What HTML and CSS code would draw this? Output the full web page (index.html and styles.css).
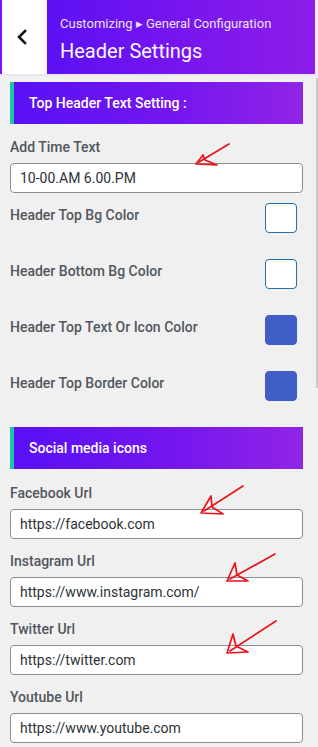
FILE: index.html
```html
<!DOCTYPE html>
<html>
<head>
<meta charset="utf-8">
<link rel="stylesheet" href="styles.css">
</head>
<body>
<div class="page">
  <header class="topbar">
    <div class="strip"></div>
    <button class="back" aria-label="Back">
      <svg width="12" height="16" viewBox="0 0 12 16"><polyline points="9,2 3,8 9,14" fill="none" stroke="#111" stroke-width="2.6" stroke-linecap="square"/></svg>
    </button>
    <div class="titles">
      <div class="crumb">Customizing ▸ General Configuration</div>
      <div class="title">Header Settings</div>
    </div>
  </header>

  <main class="content">
    <div class="section">Top Header Text Setting :</div>

    <div class="field field-time">
      <label class="label">Add Time Text</label>
      <input class="input" type="text" value="10-00.AM 6.00.PM">
    </div>

    <div class="color-row"><span class="label">Header Top Bg Color</span><span class="swatch"></span></div>
    <div class="color-row"><span class="label">Header Bottom Bg Color</span><span class="swatch"></span></div>
    <div class="color-row"><span class="label">Header Top Text Or Icon Color</span><span class="swatch filled"></span></div>
    <div class="color-row color-row-last"><span class="label">Header Top Border Color</span><span class="swatch filled"></span></div>

    <div class="section s2">Social media icons</div>

    <div class="field">
      <label class="label">Facebook Url</label>
      <input class="input" type="text" value="https://facebook.com">
    </div>
    <div class="field">
      <label class="label">Instagram Url</label>
      <input class="input" type="text" value="https://www.instagram.com/">
    </div>
    <div class="field">
      <label class="label">Twitter Url</label>
      <input class="input" type="text" value="https://twitter.com">
    </div>
    <div class="field">
      <label class="label">Youtube Url</label>
      <input class="input" type="text" value="https://www.youtube.com">
    </div>
  </main>

  <div class="scrollbar"></div>

  <svg class="arrows" width="318" height="747" viewBox="0 0 318 747">
    <g fill="none" stroke="#e8141b" stroke-width="1.7" stroke-linejoin="round" stroke-linecap="round">
      <line x1="229" y1="144" x2="199" y2="162"/>
      <polygon points="196,164 203,155 205,160 217,165"/>
      <line x1="243" y1="486" x2="204" y2="511"/>
      <polygon points="201,513 211,496 212,507 223,514"/>
      <line x1="275" y1="554" x2="230" y2="579"/>
      <polygon points="227,581 235,563 237,575 248,581"/>
      <line x1="276" y1="621" x2="230" y2="651"/>
      <polygon points="227,653 233,634 236,646 248,652"/>
    </g>
  </svg>
</div>
</body>
</html>
```

FILE: styles.css
```css
* { box-sizing: border-box; }
html, body { margin: 0; padding: 0; }
body {
  background: #f0f0f1;
  font-family: Roboto, "Liberation Sans", Arial, sans-serif;
  width: 318px;
  height: 747px;
  overflow: hidden;
}
.page { position: relative; width: 318px; height: 747px; }

.topbar {
  display: flex;
  height: 76px;
  width: 318px;
  background: #f4eefa;
  border-bottom: 2px solid #ece3f5;
  padding-right: 3px;
}
.strip { width: 2px; background: #7a12f2; }
.back {
  width: 44px;
  border: 0;
  background: #fff;
  display: flex;
  align-items: center;
  justify-content: flex-start;
  padding: 0 0 0 14px;
  margin-right: 1px;
}
.titles {
  flex: 1;
  background: linear-gradient(90deg, #5c10f4 0%, #7a16ee 55%, #8e1de8 100%);
  padding: 15px 0 0 13px;
  color: #fff;
}
.crumb {
  font-size: 13px;
  line-height: 18px;
  color: #ece3ff;
}
.title {
  font-size: 20px;
  line-height: 26px;
  margin-top: 5px;
  color: #fbf8ff;
}

.content {
  padding: 6px 15px 0 10px;
  display: flex;
  flex-direction: column;
}
.section {
  height: 42px;
  flex: none;
  display: flex;
  align-items: center;
  padding-left: 15px;
  border-left: 4px solid #1fc6a4;
  background: linear-gradient(90deg, #5910f5 0%, #7516ef 55%, #9124e6 100%);
  color: #fff;
  font-weight: 500;
  font-size: 14px;
  margin-bottom: 13px;
}
.section.s2 { margin-top: 26px; margin-bottom: 14px; }

.label {
  font-size: 14px;
  line-height: 20px;
  font-weight: 500;
  color: #50575e;
}
.field {
  display: flex;
  flex-direction: column;
  gap: 6px;
  margin-bottom: 12px;
}
.field.field-time { margin-bottom: 10px; }
.input {
  height: 30px;
  width: 100%;
  border: 1px solid #8c8f94;
  border-radius: 4px;
  background: #fff;
  padding: 0 9px;
  font-family: Roboto, "Liberation Sans", Arial, sans-serif;
  font-size: 14px;
  color: #2c3338;
  outline: none;
}

.color-row {
  display: flex;
  flex: none;
  justify-content: space-between;
  align-items: flex-start;
  height: 30px;
  margin-bottom: 26px;
}
.color-row .label { padding-top: 2px; }
.color-row.color-row-last { margin-bottom: 0; }
.swatch {
  width: 32px;
  height: 30px;
  border: 1px solid #2271b1;
  border-radius: 4px;
  background: #fff;
  margin-right: 6px;
}
.swatch.filled { background: #3f5ec6; border-color: #3f5ec6; }

.scrollbar {
  position: absolute;
  left: 316px;
  top: 78px;
  width: 2px;
  height: 310px;
  background: #c9cacd;
}
.arrows { position: absolute; left: 0; top: 0; pointer-events: none; }
```
